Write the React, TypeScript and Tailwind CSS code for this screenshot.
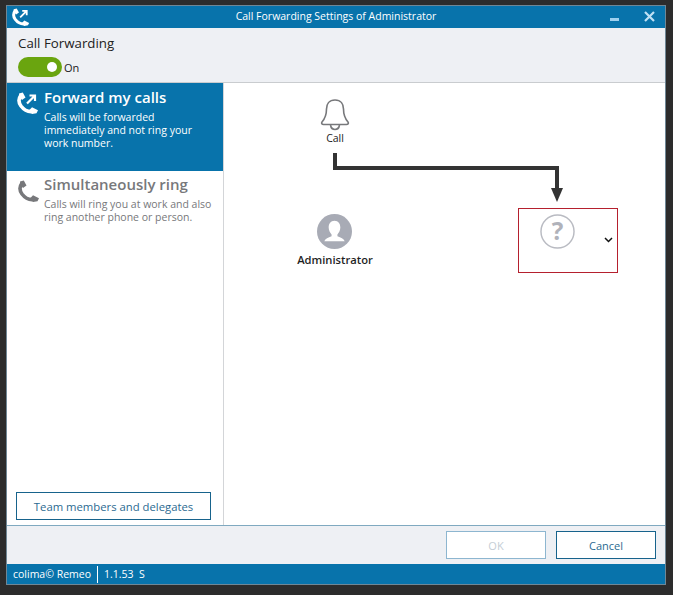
import React from "react";

const font = { fontFamily: '"Open Sans", "Noto Sans", sans-serif' };

const PhoneArrow = ({ color, arrow, size = 22 }: { color: string; arrow?: boolean; size?: number }) => (
  <svg width={size} height={size} viewBox="0 0 22 22" fill="none">
    <path d="M4 3 C1 7 1.500 10.500 4 14 C7 18 11 20 15.500 19.500" stroke={color} strokeWidth="3.600" />
    <path d="M2 1.500 L5.800 0.500 L8.500 5.500 L5 8 L2.500 5 Z" fill={color} />
    <path d="M12 18.500 L15 15.300 L21 18.300 L19.500 21.200 L15 22 Z" fill={color} />
    {arrow && <path d="M10 11.500 L17 4.500 M12.500 3.500 H18 V9" stroke={color} strokeWidth="2.200" />}
  </svg>
);

const OptionRow = ({
  active,
  title,
  lines,
}: {
  active?: boolean;
  title: string;
  lines: string[];
}) => (
  <div className={`flex ${active ? "h-[88px] bg-[#0873ab] text-white pt-[3px]" : "h-[80px] bg-white text-[#77787b] pt-[2px]"}`}>
    <div className={`w-[37px] shrink-0 ${active ? "pl-[10px] pt-[6px]" : "pl-[11px] pt-[7px]"}`}>
      <PhoneArrow color={active ? "#ffffff" : "#77787b"} arrow={active} />
    </div>
    <div>
      <div className="text-[15px] font-semibold leading-[22px] mb-[3px]">{title}</div>
      {lines.map((line) => (
        <div key={line} className="text-[10.5px] leading-[13px] whitespace-nowrap">
          {line}
        </div>
      ))}
    </div>
  </div>
);

export default function App() {
  return (
    <div style={font} className="w-[673px] h-[595px] bg-[#2c2c2c] pt-[5px] pl-[6px] pr-[7px] pb-[10px] overflow-hidden">
      <div className="h-full flex flex-col border border-[#6f8796] bg-white">
        <div className="h-[22px] bg-[#0873ab] flex items-center relative shrink-0">
          <div className="absolute left-[5px] top-[2px]">
            <PhoneArrow color="#ffffff" arrow size={18} />
          </div>
          <div className="w-full text-center text-[10.5px] text-white">
            Call Forwarding Settings of Administrator
          </div>
          <div className="absolute left-[603px] top-[12px] w-[9px] h-[3px] bg-[#9fd0ee]" />
          <svg className="absolute left-[637px] top-[5px]" width="11" height="11" viewBox="0 0 11 11">
            <path d="M1 1 L10 10 M10 1 L1 10" stroke="#bfe0f4" strokeWidth="2.200" />
          </svg>
        </div>

        <div className="h-[55px] bg-[#eef0f4] border-b border-[#c9cccf] px-[11px] shrink-0">
          <div className="text-[13.300px] leading-[18px] text-[#222222] pt-[6px]">Call Forwarding</div>
          <div className="flex items-center mt-[5px]">
            <div className="w-[44px] h-[20px] rounded-full bg-[#6aa50f] relative">
              <div className="absolute right-[5px] top-[5px] w-[10px] h-[10px] rounded-full bg-white" />
            </div>
            <span className="text-[11px] text-[#222222] ml-[2px] pt-[2px]">On</span>
          </div>
        </div>

        <div className="flex-1 flex min-h-0 border-b border-[#7fa9c0]">
          <div className="w-[217px] border-r border-[#d3d5d8] flex flex-col shrink-0">
            <OptionRow
              active
              title="Forward my calls"
              lines={["Calls will be forwarded", "immediately and not ring your", "work number."]}
            />
            <OptionRow
              title="Simultaneously ring"
              lines={["Calls will ring you at work and also", "ring another phone or person."]}
            />
            <div className="mt-auto px-[9px] pb-[5px]">
              <button className="w-[195px] h-[28px] border border-[#17638c] text-[11.300px] text-[#2b6a91] bg-white pt-[2px]">
                Team members and delegates
              </button>
            </div>
          </div>

          <div className="flex-1 relative">
            <svg className="absolute left-[96px] top-[15px]" width="30" height="34" viewBox="0 0 30 34" fill="none">
              <path
                d="M15 2 C9 2 6.500 6.500 6.500 11 C6.500 17 5.500 20 2 24 C1 25.500 2 26.500 3.500 26.500 H26.500 C28 26.500 29 25.500 28 24 C24.500 20 23.500 17 23.500 11 C23.500 6.500 21 2 15 2 Z"
                stroke="#77787b"
                strokeWidth="1.600"
              />
              <path d="M10.500 27 C11 30 13 31.500 15 31.500 C17 31.500 19 30 19.500 27" stroke="#77787b" strokeWidth="1.600" />
            </svg>
            <div className="absolute left-[81px] top-[48px] w-[60px] text-center text-[10.500px] leading-[14px] text-[#222222]">
              Call
            </div>

            <svg className="absolute left-[108px] top-[70px]" width="232" height="52" viewBox="0 0 232 52" fill="none">
              <path d="M3 0 V15 H225 V36" stroke="#333333" strokeWidth="4" />
              <path d="M219 35 H231 L225 49 Z" fill="#333333" />
            </svg>

            <svg className="absolute left-[93px] top-[131px]" width="35" height="35" viewBox="0 0 36 36">
              <circle cx="18" cy="18" r="18" fill="#a8abb5" />
              <path
                d="M18 7 C14 7 12 10 12 14 C12 17 13.500 19.500 15 21 V23 C11.500 24.500 8.500 25.500 7.500 28 H28.500 C27.500 25.500 24.500 24.500 21 23 V21 C22.500 19.500 24 17 24 14 C24 10 22 7 18 7 Z"
                fill="#ffffff"
              />
            </svg>
            <div className="absolute left-[61px] top-[169px] w-[100px] text-center text-[11.200px] font-semibold leading-[16px] text-[#1f1f1f]">
              Administrator
            </div>

            <div className="absolute left-[294px] top-[125px] w-[100px] h-[65px] border border-[#b5202e]">
              <svg className="absolute left-[21px] top-[5px]" width="35" height="35" viewBox="0 0 36 36" fill="none">
                <circle cx="18" cy="18" r="17" stroke="#b9bbc2" strokeWidth="1.500" />
                <text x="18" y="26.500" textAnchor="middle" fontSize="25" fontWeight="700" fill="#b0b2ba" fontFamily="Open Sans">
                  ?
                </text>
              </svg>
              <svg className="absolute left-[85px] top-[28px]" width="9" height="6" viewBox="0 0 9 6" fill="none">
                <path d="M1 1 L4.500 4.500 L8 1" stroke="#111111" strokeWidth="1.500" />
              </svg>
            </div>
          </div>
        </div>

        <div className="h-[38px] bg-[#eef0f4] flex justify-end items-start gap-[10px] pt-[5px] pr-[9px] shrink-0">
          <button className="w-[100px] h-[28px] border border-[#8db6d0] bg-white text-[11px] text-[#c5ced6] pt-[2px]">OK</button>
          <button className="w-[100px] h-[28px] border border-[#17638c] bg-white text-[11px] text-[#2b6a91] pt-[2px]">Cancel</button>
        </div>

        <div className="h-[20px] bg-[#0873ab] flex items-center text-[10.500px] text-white pl-[6px] pt-[1px] shrink-0">
          <span>colima© Remeo</span>
          <span className="w-px h-[17px] bg-white mx-[6px]" />
          <span className="whitespace-pre">1.1.53  S</span>
        </div>
      </div>
    </div>
  );
}
